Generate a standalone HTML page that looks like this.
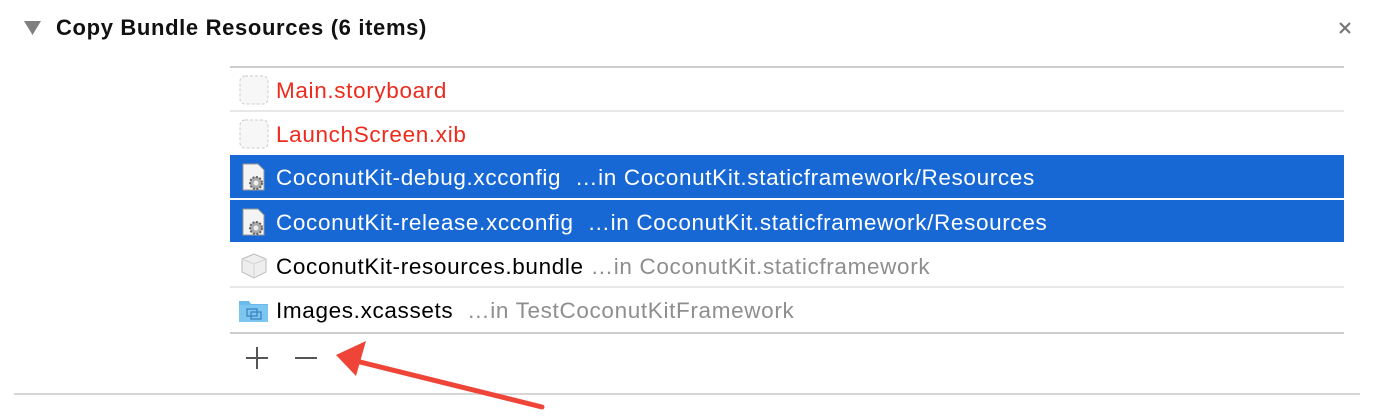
<!DOCTYPE html><html><head><style>
body{margin:0;width:1382px;height:420px;background:#fff;position:relative;overflow:hidden;font-family:"Liberation Sans",Arial,sans-serif}
.a{position:absolute}
.row{position:absolute;left:230px;width:1114px;height:43px;font-size:22.5px;line-height:46px;letter-spacing:0.65px}
.row span.t{position:absolute;left:46px;white-space:pre}
.g{color:#8e8e8e}
.sel{background:#1768d4;color:#fff}
.ico{position:absolute;left:9px;top:7px;width:30px;height:30px}
</style></head><body>
<svg class="a" style="left:24px;top:21px" width="18" height="16"><polygon points="0,0 17,0 8.5,14" fill="#7f7f7f"/></svg>
<div class="a" style="left:56px;top:15px;font-size:22px;letter-spacing:0.65px;font-weight:bold;color:#111">Copy Bundle Resources (6 items)</div>
<svg class="a" style="left:1338px;top:21px" width="14" height="14"><path d="M2 2L12 12M12 2L2 12" stroke="#777" stroke-width="2.2"/></svg>
<div class="a" style="left:230px;top:66px;width:1114px;height:2px;background:#ccc"></div>
<div class="row" style="top:68px;color:#ee2a1d"><svg class="ico" viewBox="0 0 30 30"><rect x="1" y="1" width="28" height="28" rx="5" fill="#f7f7f7" stroke="#ccc" stroke-dasharray="3 2"/></svg><span class="t">Main.storyboard</span></div>
<div class="a" style="left:230px;top:110px;width:1114px;height:2px;background:#e8e8e8"></div>
<div class="row" style="top:112px;color:#ee2a1d"><svg class="ico" viewBox="0 0 30 30"><rect x="1" y="1" width="28" height="28" rx="5" fill="#f7f7f7" stroke="#ccc" stroke-dasharray="3 2"/></svg><span class="t">LaunchScreen.xib</span></div>
<div class="row sel" style="top:155px"><svg class="ico" viewBox="0 0 30 30"><path d="M4 2h15l6 6v20H4z" fill="#f4f4f4" stroke="#999"/><circle cx="17" cy="21" r="6" fill="#aaa" stroke="#666" stroke-dasharray="2 1.5" stroke-width="2"/><circle cx="17" cy="21" r="2.5" fill="#eee"/></svg><span class="t">CoconutKit-debug.xcconfig  …in CoconutKit.staticframework/Resources</span></div>
<div class="row sel" style="top:200px;height:42px;line-height:45px"><svg class="ico" viewBox="0 0 30 30"><path d="M4 2h15l6 6v20H4z" fill="#f4f4f4" stroke="#999"/><circle cx="17" cy="21" r="6" fill="#aaa" stroke="#666" stroke-dasharray="2 1.5" stroke-width="2"/><circle cx="17" cy="21" r="2.5" fill="#eee"/></svg><span class="t">CoconutKit-release.xcconfig  …in CoconutKit.staticframework/Resources</span></div>
<div class="row" style="top:244px"><svg class="ico" viewBox="0 0 30 30"><path d="M15 3l12 5v13l-12 6-12-6V8z" fill="#eee" stroke="#bbb"/><path d="M3 8l12 5 12-5M15 13v14" stroke="#d4d4d4" fill="none"/></svg><span class="t">CoconutKit-resources.bundle <span class="g">…in CoconutKit.staticframework</span></span></div>
<div class="a" style="left:230px;top:286px;width:1114px;height:2px;background:#e8e8e8"></div>
<div class="row" style="top:288px"><svg class="ico" viewBox="0 0 30 30"><path d="M0 6h10l2 3h17v18H0z" fill="#6bbaed"/><rect x="0" y="10" width="29" height="17" fill="#7ec6f2"/><rect x="8" y="14" width="10" height="7" fill="none" stroke="#3a85c0" stroke-width="1.3"/><rect x="12" y="17" width="10" height="7" fill="none" stroke="#3a85c0" stroke-width="1.3"/></svg><span class="t">Images.xcassets  <span class="g">…in TestCoconutKitFramework</span></span></div>
<div class="a" style="left:230px;top:332px;width:1114px;height:2px;background:#ccc"></div>
<svg class="a" style="left:245px;top:346px" width="24" height="24"><path d="M12 1v22M1 12h22" stroke="#555" stroke-width="2"/></svg>
<svg class="a" style="left:294px;top:346px" width="24" height="24"><path d="M1 12h22" stroke="#555" stroke-width="2"/></svg>
<div class="a" style="left:14px;top:393px;width:1346px;height:2px;background:#d6d6d6"></div>
<svg class="a" style="left:0;top:0" width="1382" height="420"><line x1="542" y1="407" x2="352" y2="360" stroke="#ee4538" stroke-width="5" stroke-linecap="round"/><polygon points="336,355 366,341 356,376" fill="#ee4538"/></svg>
</body></html>
